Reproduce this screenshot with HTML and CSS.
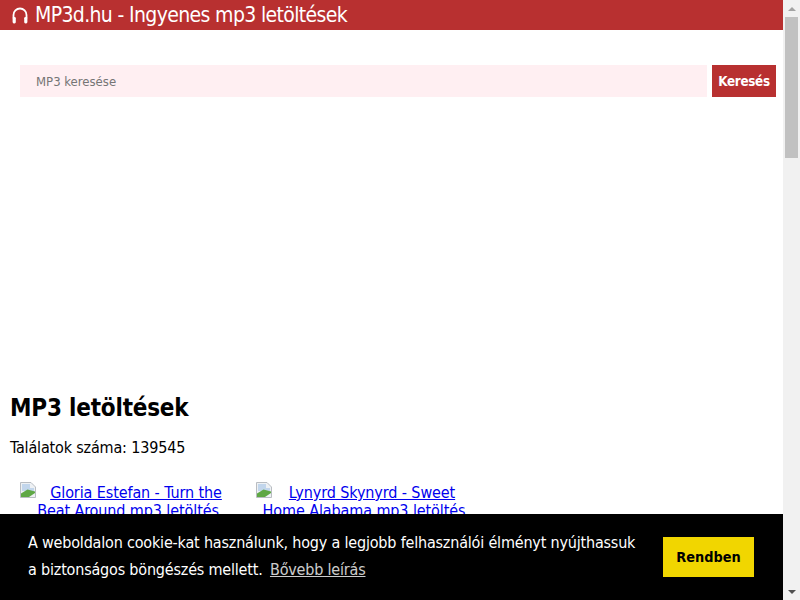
FILE: index.html
```html
<!DOCTYPE html>
<html>
<head>
    <title>MP3d.hu - Ingyenes mp3 letöltések</title>
    <link rel="stylesheet" href="styles.css">
</head>
<body>
    <div class="page">
        <div class="header">
            <svg class="logo" width="16" height="17" viewBox="0 0 16 17">
                <path d="M1.5 11V8a6.5 6.5 0 0 1 13 0V11" fill="none" stroke="#fff" stroke-width="1.8"/>
                <rect x="0.6" y="10" width="3.2" height="6.4" rx="1.3" fill="#fff"/>
                <rect x="12.2" y="10" width="3.2" height="6.4" rx="1.3" fill="#fff"/>
            </svg>
            <span>MP3d.hu - Ingyenes mp3 letöltések</span>
        </div>

        <form class="search-container">
            <input type="text" id="search-input" placeholder="MP3 keresése">
            <button type="button" id="search-button">Keresés</button>
        </form>

        <h1>MP3 letöltések</h1>
        <p class="count">Találatok száma: 139545</p>

        <div class="results-grid">
            <a class="listing" href="#">
                <svg class="broken" width="16" height="16" viewBox="0 0 16 16">
                    <path d="M0.5 0.5H11L15.5 5V15.5H0.5Z" fill="#eef1f4" stroke="#b9bdc2"/>
                    <path d="M2 2H10V6H14V9H2Z" fill="#c2d6ec"/>
                    <path d="M1 15V11.5L7.5 7.5L15 9.5V11L9 15Z" fill="#5fa845"/>
                </svg>
                Gloria Estefan - Turn the Beat Around mp3 letöltés
            </a>
            <a class="listing" href="#">
                <svg class="broken" width="16" height="16" viewBox="0 0 16 16">
                    <path d="M0.5 0.5H11L15.5 5V15.5H0.5Z" fill="#eef1f4" stroke="#b9bdc2"/>
                    <path d="M2 2H10V6H14V9H2Z" fill="#c2d6ec"/>
                    <path d="M1 15V11.5L7.5 7.5L15 9.5V11L9 15Z" fill="#5fa845"/>
                </svg>
                Lynyrd Skynyrd - Sweet Home Alabama mp3 letöltés
            </a>
        </div>

        <div class="cookie-bar">
            <div class="cookie-text">
                A weboldalon cookie-kat használunk, hogy a legjobb felhasználói élményt nyújthassuk a biztonságos böngészés mellett.
                <a href="#">Bővebb leírás</a>
            </div>
            <button type="button" class="cookie-button">Rendben</button>
        </div>
    </div>

    <div class="scrollbar">
        <div class="arrow arrow-up"></div>
        <div class="thumb"></div>
        <div class="track"></div>
        <div class="arrow arrow-down"></div>
    </div>
</body>
</html>
```

FILE: styles.css
```css
html, body {
    height: 100%;
}

body {
    font-family: "DejaVu Sans", Arial, sans-serif;
    font-stretch: condensed;
    font-size: 16px;
    margin: 0;
    display: flex;
    overflow: hidden;
    background-color: #fff;
    color: #000;
}

.page {
    position: relative;
    flex: 1;
    height: 100vh;
    overflow: hidden;
}

.header {
    height: 30px;
    display: flex;
    align-items: center;
    gap: 7px;
    padding-left: 12px;
    background-color: #b83030;
    color: #fff;
    font-size: 21px;
    letter-spacing: -0.64px;
}

.search-container {
    display: flex;
    gap: 5px;
    margin: 35px 7px 0 20px;
}

#search-input {
    flex: 1;
    height: 32px;
    box-sizing: border-box;
    padding: 0 16px;
    border: none;
    background-color: #ffeff2;
    font: inherit;
    font-stretch: condensed;
    font-size: 13px;
}

#search-input::placeholder {
    color: #757575;
    opacity: 1;
}

#search-button {
    width: 64px;
    height: 32px;
    padding: 0;
    border: none;
    background-color: #b83030;
    color: #fff;
    font: inherit;
    font-stretch: condensed;
    font-size: 13.33px;
    font-weight: bold;
    letter-spacing: -0.3px;
}

h1 {
    margin: 296px 0 0 10px;
    font-size: 24px;
    line-height: 30px;
    letter-spacing: -0.2px;
}

.count {
    margin: 15px 0 0 10px;
    line-height: 19px;
    letter-spacing: -0.17px;
}

.results-grid {
    display: flex;
    gap: 20px;
    margin: 27px 0 0 20px;
}

.listing {
    width: 216px;
    text-align: center;
    line-height: 18px;
    letter-spacing: -0.1px;
    color: #0000ee;
}

.broken {
    float: left;
    margin-top: -2px;
}

.cookie-bar {
    position: absolute;
    left: 0;
    right: 0;
    bottom: 0;
    height: 86px;
    box-sizing: border-box;
    padding: 0 29px 2px 28px;
    display: flex;
    align-items: center;
    gap: 20px;
    background-color: #000;
    color: #fff;
    line-height: 27px;
    letter-spacing: -0.19px;
}

.cookie-text {
    flex: 1;
}

.cookie-text a {
    margin-left: 3px;
    color: #fff;
    opacity: 0.8;
}

.cookie-button {
    width: 91px;
    height: 40px;
    margin-top: 2px;
    padding: 0;
    border: none;
    background-color: #f1d600;
    color: #000;
    font: inherit;
    font-stretch: condensed;
    font-size: 14.4px;
    font-weight: bold;
}

.scrollbar {
    width: 17px;
    height: 100vh;
    display: flex;
    flex-direction: column;
    background-color: #f1f1f1;
}

.arrow {
    height: 17px;
    display: flex;
    align-items: center;
    justify-content: center;
}

.arrow::before {
    content: "";
    border-left: 4px solid transparent;
    border-right: 4px solid transparent;
}

.arrow-up::before {
    border-bottom: 4px solid #a3a3a3;
}

.arrow-down::before {
    border-top: 4px solid #505050;
}

.thumb {
    height: 141px;
    margin: 0 2px;
    background-color: #c1c1c1;
}

.track {
    flex: 1;
}
```
